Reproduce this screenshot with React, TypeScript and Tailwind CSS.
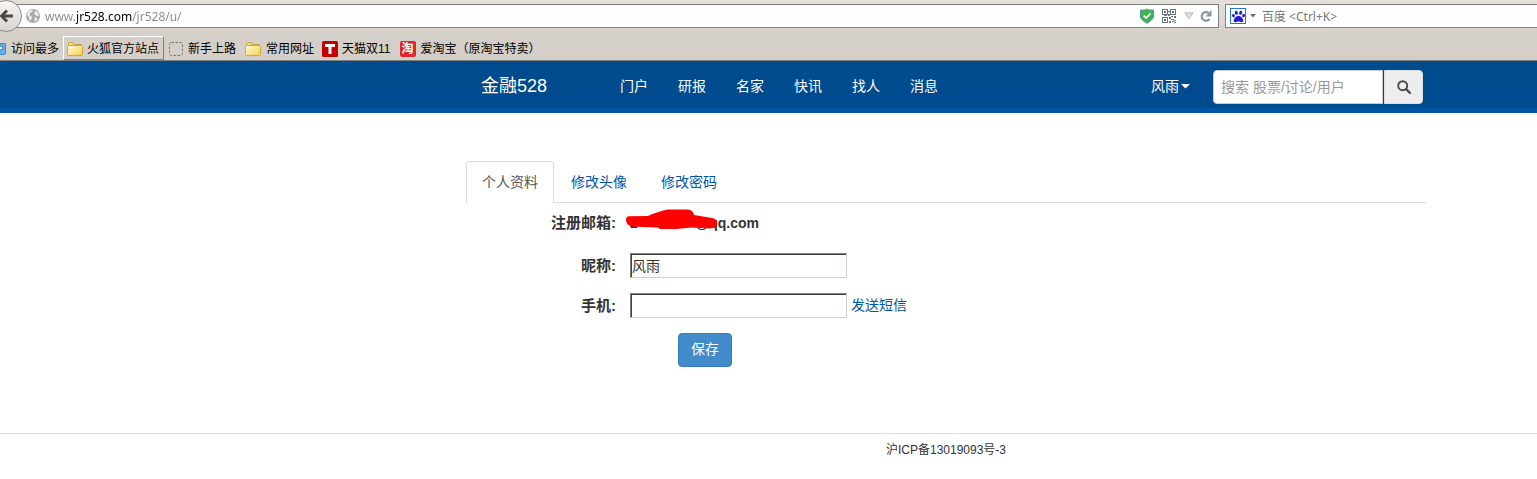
import { FaPaw } from "react-icons/fa";

const menu = ["门户", "研报", "名家", "快讯", "找人", "消息"];

function Folder() {
  return (
    <svg width="16" height="16" viewBox="0 0 16 16" className="shrink-0" aria-hidden="true">
      <defs>
        <linearGradient id="folder" x1="0" y1="0" x2="1" y2="1">
          <stop offset="0" stopColor="#fffbd8" />
          <stop offset="1" stopColor="#f3cf4e" />
        </linearGradient>
      </defs>
      <path d="M1.5 13V2.5q0-1 1-1h3.5l1 2h7.5v9.500z" fill="#f0d98c" stroke="#c9a340" />
      <path d="M.5 5.500q0-1 1-1h13q1 0 1 1v8q0 1-1 1h-13q-1 0-1-1z" fill="url(#folder)" stroke="#cfa93f" />
    </svg>
  );
}

function Globe() {
  return (
    <svg width="16" height="16" viewBox="0 0 16 16" className="shrink-0" aria-hidden="true">
      <circle cx="8" cy="8" r="7" fill="#a9a9a9" />
      <path d="M3 3.500Q5 1.500 8 2L7 4 5 5 4.500 7 7 9 6 12 4.500 12.500 4 9 2 7zM10 2.500l3 2 1 3-2 1-2-2-1.500-1 1.500-1zM9.500 9.500l3 .5-1 2.500-2 1z" fill="#efefef" />
    </svg>
  );
}

function Shield() {
  return (
    <svg width="14" height="16" viewBox="0 0 14 16" className="shrink-0" aria-hidden="true">
      <path d="M.5 2H5L7 1l2 1h4.500v7.500Q12 12.500 7 15.300 2 12.500.5 9.500z" fill="#3fb34f" stroke="#4d99a0" />
      <path d="M3.700 7.500 6.200 10l4.300-4.500" fill="none" stroke="#fff" strokeWidth="1.800" />
    </svg>
  );
}

function QrCode() {
  return (
    <svg width="14" height="14" viewBox="0 0 14 14" className="shrink-0" fill="#6b7780" shapeRendering="crispEdges" aria-hidden="true">
      <path fillRule="evenodd" d="M0 0h6v6H0zM1 1v4h4V1zM8 0h6v6H8zM9 1v4h4V1zM0 8h6v6H0zM1 9v4h4V9z" />
      <path d="M2 2h2v2H2zM10 2h2v2h-2zM2 10h2v2H2zM6 2h2v1H6zM6 5h2v2H6zM2 6h3v1H2zM9 7h2v1H9zM12 7h2v2h-2zM7 8h2v2H7zM9 10h3v1H9zM12 11h2v1h-2zM7 12h2v2H7zM10 12h2v1h-2zM12 13h2v1h-2z" />
    </svg>
  );
}

function Reload() {
  return (
    <svg width="12" height="14" viewBox="0 0 12 14" className="shrink-0" aria-hidden="true">
      <path d="M8.800 4.200A4.300 4.300 0 1 0 9.500 10" fill="none" stroke="#8b969f" strokeWidth="2.200" />
      <path d="M11.500 1v6.500H5.500z" fill="#8b969f" />
    </svg>
  );
}

function Magnifier() {
  return (
    <svg width="14" height="14" viewBox="0 0 14 14" aria-hidden="true">
      <circle cx="5.700" cy="5.700" r="4.500" fill="none" stroke="#4a4a4a" strokeWidth="1.900" />
      <path d="M9 9l4 4" stroke="#4a4a4a" strokeWidth="2.400" strokeLinecap="round" />
    </svg>
  );
}

function Toolbar() {
  return (
    <div className="relative flex h-7 items-end">
      <div className="ml-3 flex h-6 min-w-0 flex-1 items-center border border-[#808080] bg-white pl-3 pr-1">
        <Globe />
        <input
          aria-label="地址"
          defaultValue="www.jr528.com/jr528/u/"
          className="ml-1 min-w-0 flex-1 bg-[linear-gradient(90deg,#8a8a8a_31px,#000_31px,#000_87px,#8a8a8a_87px)] bg-clip-text pt-0.5 font-['Noto_Sans',sans-serif] text-[12px] leading-5 text-transparent caret-black outline-none"
        />
        <span className="ml-1"><Shield /></span>
        <span className="ml-2"><QrCode /></span>
        <svg width="10" height="8" viewBox="0 0 10 8" className="ml-2 shrink-0" aria-hidden="true">
          <path d="M.8.8h8.400L5 6.800z" fill="#dfe3e6" stroke="#b4bbc1" />
        </svg>
        <button aria-label="重新载入" className="ml-1.5 mr-0.5"><Reload /></button>
      </div>
      <div className="ml-1.5 flex h-6 w-[312px] shrink-0 items-center border border-r-0 border-[#808080] bg-white pl-1">
        <span className="flex size-4 items-center justify-center border border-[#1e7ccb] bg-white text-[#211bd9]">
          <FaPaw size={13} />
        </span>
        <svg width="6" height="4" viewBox="0 0 6 4" className="ml-1 shrink-0" aria-hidden="true">
          <path d="M0 0h6L3 3.500z" fill="#6b6b6b" />
        </svg>
        <input
          aria-label="百度搜索"
          placeholder="百度 <Ctrl+K>"
          className="ml-1.5 min-w-0 flex-1 bg-transparent pt-0.5 font-['Noto_Sans','Noto_Sans_CJK_SC',sans-serif] text-[12px] leading-5 outline-none placeholder:text-[#777]"
        />
      </div>
      <button
        aria-label="后退"
        className="absolute -left-2.5 top-0 flex size-8 items-center justify-center rounded-full border border-[#8f8c87] bg-linear-to-b from-[#f7f6f4] to-[#d8d4ce]"
      >
        <svg width="16" height="16" viewBox="0 0 16 16" aria-hidden="true">
          <path d="M15 8H4M9 2.500 3.500 8 9 13.500" fill="none" stroke="#4d4a45" strokeWidth="3" />
        </svg>
      </button>
    </div>
  );
}

function Bookmarks() {
  return (
    <nav aria-label="书签" className="mt-2 flex h-6 overflow-hidden text-[12px] leading-4 text-black">
      <a href="#most" className="flex items-center gap-1 whitespace-nowrap pt-0.5">
        <svg width="7" height="14" viewBox="0 0 7 14" aria-hidden="true">
          <path d="M0 1.500h4.500q1 0 1 1v9q0 1-1 1H0" fill="#62b0e6" stroke="#3c86bf" />
          <circle cx="1" cy="6" r="2" fill="#d9effb" stroke="#3573a8" />
        </svg>
        访问最多
      </a>
      <a href="#official" className="ml-1 flex items-center gap-1 whitespace-nowrap border border-b-[#808080] border-l-white border-r-[#808080] border-t-white px-1 pl-[3px] pt-0.5">
        <Folder />
        火狐官方站点
      </a>
      <a href="#start" className="ml-1 flex items-center gap-1 whitespace-nowrap pt-0.5">
        <svg width="16" height="16" viewBox="0 0 16 16" aria-hidden="true">
          <rect x="1.500" y="1.500" width="13" height="13" rx="2" fill="none" stroke="#777" strokeDasharray="2.500 1.500" />
        </svg>
        新手上路
      </a>
      <a href="#common" className="ml-[9px] flex items-center gap-[5px] whitespace-nowrap pt-0.5">
        <Folder />
        常用网址
      </a>
      <a href="#tmall" className="ml-2 flex items-center gap-1 whitespace-nowrap pt-0.5">
        <svg width="16" height="16" viewBox="0 0 16 16" aria-hidden="true">
          <rect width="16" height="16" rx="1.500" fill="#c40000" />
          <path d="M3 3h10v3H9.500v7h-3V6H3z" fill="#fff" />
        </svg>
        天猫双11
      </a>
      <a href="#taobao" className="ml-[9px] flex items-center gap-[5px] whitespace-nowrap pt-0.5">
        <span className="flex size-4 items-center justify-center rounded-xs bg-[#e02430] text-[12px] font-bold leading-4 text-white">淘</span>
        爱淘宝（原淘宝特卖）
      </a>
    </nav>
  );
}

function SiteHeader() {
  return (
    <header className="border-b-[5px] border-[#0055a5] bg-[#004b8d] pl-[355px] text-white">
      <div className="mx-auto flex h-[47px] max-w-[960px] items-center pt-[3px]">
        <a href="#home" className="whitespace-nowrap px-[15px] text-[18px] leading-5">金融528</a>
        <nav aria-label="主菜单" className="ml-[43px] flex">
          {menu.map((m) => (
            <a key={m} href={"#" + m} className="whitespace-nowrap px-[15px] text-[14px] leading-5">{m}</a>
          ))}
        </nav>
        <button className="ml-auto mr-[23px] flex items-center gap-0.5 whitespace-nowrap text-[14px] leading-5">
          风雨
          <svg width="9" height="5" viewBox="0 0 9 5" aria-hidden="true"><path d="M0 0h9L4.500 4.500z" fill="#fff" /></svg>
        </button>
        <form className="mr-[3px] mt-0.5 flex h-[34px]" onSubmit={(e) => e.preventDefault()}>
          <input
            aria-label="搜索"
            placeholder="搜索 股票/讨论/用户"
            className="w-[170px] rounded-l border border-[#ccc] bg-white px-[7px] text-[14px] text-[#555] outline-none placeholder:text-[#999]"
          />
          <button aria-label="搜索" className="ml-px flex w-[39px] items-center justify-center rounded-r border border-[#e0e0e0] bg-[#ededed]">
            <Magnifier />
          </button>
        </form>
      </div>
    </header>
  );
}

function Profile() {
  const field =
    "h-[25px] w-[217px] border border-b-[#d4d0c8] border-l-[#808080] border-r-[#d4d0c8] border-t-[#808080] bg-white px-px pb-0.5 text-[14px] leading-5 text-[#333] shadow-[inset_1px_1px_0_#404040] outline-none";
  const label = "w-[150px] text-right text-[15px] font-bold leading-5";
  return (
    <main className="pl-[355px] pt-12 text-[14px] leading-5 text-[#333]">
      <div className="mx-auto max-w-[960px]">
        <div role="tablist" className="flex border-b border-[#ddd]">
          <button role="tab" aria-selected="true" className="-mb-px h-[42px] rounded-t border border-b-0 border-[#ddd] bg-white px-[15px] pb-0.5 text-[#555]">个人资料</button>
          <button role="tab" aria-selected="false" className="ml-px h-[41px] px-4 text-[#0055a5]">修改头像</button>
          <button role="tab" aria-selected="false" className="ml-0.5 h-[41px] px-4 text-[#0055a5]">修改密码</button>
        </div>
        <form onSubmit={(e) => e.preventDefault()}>
          <div className="flex h-[50px] items-start gap-3.5 pt-2.5">
            <div className={label}>注册邮箱:</div>
            <div className="relative flex w-[129px] justify-between font-bold">
              <span>2</span>
              <span>@qq.com</span>
              <svg width="94" height="22" viewBox="0 0 94 22" className="absolute -left-1 -top-1" aria-hidden="true">
                <path d="M0 11Q0 7.500 3 7.300L22 7Q30 3 42 .5H62Q67 1 68 6L86 9Q92 10 91 15Q91 19 84 19.500L66 18.500 50 20H34L32 18.500 5 17.500Q0 15 0 11Z" fill="#f00" />
              </svg>
            </div>
          </div>
          <div className="flex h-10 items-start gap-3.5">
            <label htmlFor="nick" className={label + " pt-[3px]"}>昵称:</label>
            <input id="nick" defaultValue="风雨" className={field} />
          </div>
          <div className="flex h-10 items-start gap-3.5">
            <label htmlFor="phone" className={label + " pt-[3px]"}>手机:</label>
            <div className="flex gap-1">
              <input id="phone" type="tel" className={field} />
              <a href="#sms" className="whitespace-nowrap pt-0.5 text-[#0055a5]">发送短信</a>
            </div>
          </div>
          <button className="ml-[212px] block h-[34px] rounded border border-[#357ebd] bg-[#428bca] px-3 pb-0.5 text-white">保存</button>
        </form>
      </div>
    </main>
  );
}

export default function App() {
  return (
    <div className="overflow-x-hidden bg-white font-['Liberation_Sans','Noto_Sans_CJK_SC',sans-serif]">
      <div className="h-[61px] border-b border-[#808080] bg-linear-to-b from-[#e4e1dc] to-[#d4cfc8] to-60%">
        <Toolbar />
        <Bookmarks />
      </div>
      <SiteHeader />
      <Profile />
      <footer className="mt-[66px] border-t border-[#ddd] pl-[355px] pt-2 text-center text-[12px] leading-4 text-[#333]">
        沪ICP备13019093号-3
      </footer>
    </div>
  );
}
